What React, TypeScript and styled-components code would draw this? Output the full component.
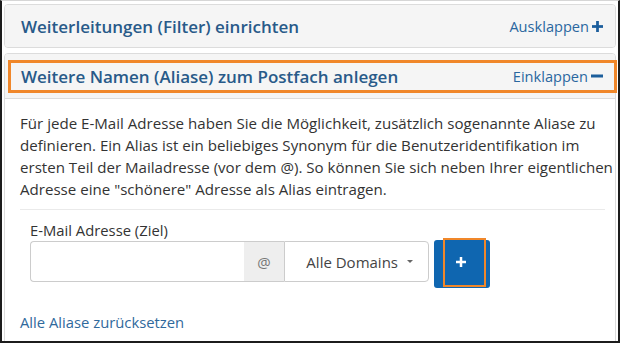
import React, { useState } from 'react';
import styled, { createGlobalStyle } from 'styled-components';

const GlobalStyle = createGlobalStyle`
  html, body {
    margin: 0;
    padding: 0;
    background: #fff;
  }
  body {
    font-family: 'Open Sans', 'Liberation Sans', sans-serif;
    font-size: 15px;
    color: #333;
  }
`;

const PlusIcon: React.FC<{ size?: number; color?: string }> = ({ size = 11, color = 'currentColor' }) => (
  <svg width={size} height={size} viewBox="0 0 12 12" aria-hidden>
    <rect x="4.5" y="0" width="3" height="12" fill={color} />
    <rect x="0" y="4.5" width="12" height="3" fill={color} />
  </svg>
);

const MinusIcon: React.FC<{ size?: number; color?: string }> = ({ size = 12, color = 'currentColor' }) => (
  <svg width={size} height={size} viewBox="0 0 12 12" aria-hidden>
    <rect x="0" y="4.5" width="12" height="3" fill={color} />
  </svg>
);

const introLines = [
  'Für jede E-Mail Adresse haben Sie die Möglichkeit, zusätzlich sogenannte Aliase zu',
  'definieren. Ein Alias ist ein beliebiges Synonym für die Benutzeridentifikation im',
  'ersten Teil der Mailadresse (vor dem @). So können Sie sich neben Ihrer eigentlichen',
  'Adresse eine "schönere" Adresse als Alias eintragen.',
];

const App: React.FC = () => {
  const [alias, setAlias] = useState('');
  const [filterOpen, setFilterOpen] = useState(false);

  return (
    <Frame>
      <GlobalStyle />
      <PanelGroup>
        <Panel>
          <PanelHeading>
            <PanelTitle>Weiterleitungen (Filter) einrichten</PanelTitle>
            <Toggle onClick={() => setFilterOpen(!filterOpen)}>
              Ausklappen
              <PlusIcon size={11} />
            </Toggle>
          </PanelHeading>
        </Panel>

        <Panel>
          <PanelHeading $bordered>
            <PanelTitle>Weitere Namen (Aliase) zum Postfach anlegen</PanelTitle>
            <Toggle>
              Einklappen
              <MinusIcon size={12} />
            </Toggle>
            <Highlight />
          </PanelHeading>
          <PanelBody>
            <Intro>
              {introLines.map((line) => (
                <IntroLine key={line}>{line}</IntroLine>
              ))}
            </Intro>
            <Divider />
            <FormGroup>
              <Label htmlFor="alias">E-Mail Adresse (Ziel)</Label>
              <InputRow>
                <InputGroup>
                  <TextInput id="alias" value={alias} onChange={(e) => setAlias(e.target.value)} />
                  <Addon>@</Addon>
                  <DomainSelect>
                    Alle Domains
                    <Caret />
                  </DomainSelect>
                </InputGroup>
                <AddButton>
                  <PlusIcon size={10} color="#fff" />
                  <Highlight $tight />
                </AddButton>
              </InputRow>
            </FormGroup>
            <ResetLink href="#">Alle Aliase zurücksetzen</ResetLink>
          </PanelBody>
        </Panel>
      </PanelGroup>
    </Frame>
  );
};

export default App;

const Frame = styled.div`
  box-sizing: border-box;
  width: 620px;
  height: 343px;
  overflow: hidden;
  border-top: 1px solid #d6d6d6;
  border-left: 2px solid #1c1c1c;
  border-right: 2px solid #1c1c1c;
  border-bottom: 2px solid #1c1c1c;
  padding: 3px 2px 0 2px;
`;

const PanelGroup = styled.div`
  display: flex;
  flex-direction: column;
  gap: 5px;
`;

const Panel = styled.div`
  border: 1px solid #dcdcdc;
  border-radius: 4px;
  background: #fff;
`;

const PanelHeading = styled.div<{ $bordered?: boolean }>`
  position: relative;
  display: flex;
  align-items: center;
  justify-content: space-between;
  height: ${(p) => (p.$bordered ? '44px' : '42px')};
  padding: 0 12px 0 16px;
  background: #f5f5f5;
  border-radius: 3px 3px ${(p) => (p.$bordered ? '0 0' : '3px 3px')};
  border-bottom: ${(p) => (p.$bordered ? '1px solid #dcdcdc' : 'none')};
`;

const PanelTitle = styled.h4`
  margin: 0;
  font-size: 17px;
  font-weight: 600;
  color: #285a89;
`;

const Toggle = styled.span`
  display: flex;
  align-items: center;
  gap: 3px;
  font-size: 14.6px;
  color: #2a679f;
  cursor: pointer;

  svg {
    color: #1c5e9c;
  }
`;

const Highlight = styled.span<{ $tight?: boolean }>`
  position: absolute;
  pointer-events: none;
  border: ${(p) => (p.$tight ? '2px' : '3px')} solid #f0872a;
  top: ${(p) => (p.$tight ? '-2px' : '6px')};
  bottom: ${(p) => (p.$tight ? '1px' : '5px')};
  left: ${(p) => (p.$tight ? '9px' : '3px')};
  right: ${(p) => (p.$tight ? '4px' : '-2px')};
`;

const PanelBody = styled.div`
  padding: 13px 1px 0 15px;
  height: 260px;
`;

const Intro = styled.p`
  margin: 0;
  font-size: 15.1px;
  line-height: 22px;
  color: #333;
`;

const IntroLine = styled.span`
  display: block;
  white-space: nowrap;
`;

const Divider = styled.hr`
  border: 0;
  border-top: 1px solid #eaeaea;
  margin: 9px 9px 10px 0;
`;

const FormGroup = styled.div`
  padding-left: 10px;
`;

const Label = styled.label`
  display: block;
  font-size: 14.8px;
  line-height: 20px;
  color: #333;
  margin-bottom: 1px;
`;

const InputRow = styled.div`
  display: flex;
  align-items: flex-start;
  gap: 5px;
`;

const InputGroup = styled.div`
  display: flex;
  height: 41px;
`;

const TextInput = styled.input`
  box-sizing: border-box;
  width: 214px;
  height: 41px;
  border: 1px solid #ccc;
  border-right: 0;
  border-radius: 4px 0 0 4px;
  padding: 6px 12px;
  font-family: inherit;
  font-size: 15px;
  outline: none;
`;

const Addon = styled.span`
  box-sizing: border-box;
  display: flex;
  align-items: center;
  justify-content: center;
  width: 40px;
  background: #eee;
  border-top: 1px solid #ccc;
  border-bottom: 1px solid #ccc;
  color: #777;
  font-size: 15px;
`;

const DomainSelect = styled.span`
  box-sizing: border-box;
  display: flex;
  align-items: center;
  justify-content: flex-end;
  gap: 9px;
  width: 145px;
  padding-right: 15px;
  border: 1px solid #ccc;
  border-radius: 0 4px 4px 0;
  background: #fff;
  color: #444;
  font-size: 15px;
`;

const Caret = styled.span`
  width: 0;
  height: 0;
  border-left: 3px solid transparent;
  border-right: 3px solid transparent;
  border-top: 3px solid #666;
`;

const AddButton = styled.button`
  position: relative;
  box-sizing: border-box;
  width: 56px;
  height: 48px;
  margin-top: -1px;
  display: flex;
  align-items: flex-start;
  justify-content: center;
  padding-top: 17px;
  padding-left: 3px;
  background: #0f66b0;
  border: 0;
  border-radius: 3px;
  cursor: pointer;
`;

const ResetLink = styled.a`
  display: inline-block;
  margin-top: 24px;
  font-size: 14.8px;
  color: #30699c;
  text-decoration: none;
`;
